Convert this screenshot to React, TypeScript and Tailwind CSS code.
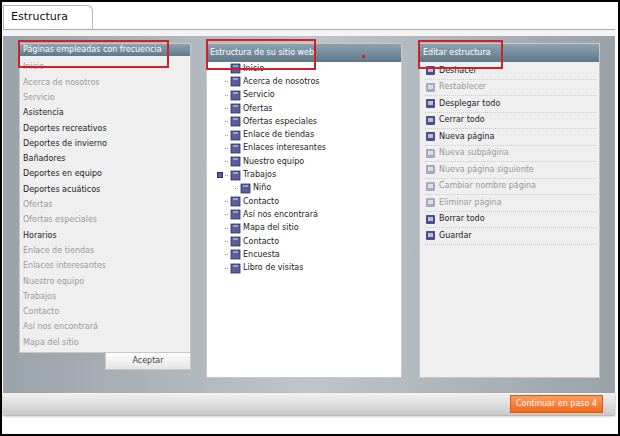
const freq: [string, boolean][] = [
  ['Inicio', false], ['Acerca de nosotros', false], ['Servicio', false], ['Asistencia', true],
  ['Deportes recreativos', true], ['Deportes de invierno', true], ['Bañadores', true],
  ['Deportes en equipo', true], ['Deportes acuáticos', true], ['Ofertas', false],
  ['Ofertas especiales', false], ['Horarios', true], ['Enlace de tiendas', false],
  ['Enlaces interesantes', false], ['Nuestro equipo', false], ['Trabajos', false],
  ['Contacto', false], ['Así nos encontrará', false], ['Mapa del sitio', false],
];

const tree: [string, number][] = [
  ['Inicio', 0], ['Acerca de nosotros', 0], ['Servicio', 0], ['Ofertas', 0],
  ['Ofertas especiales', 0], ['Enlace de tiendas', 0], ['Enlaces interesantes', 0],
  ['Nuestro equipo', 0], ['Trabajos', 0], ['Niño', 1], ['Contacto', 0],
  ['Así nos encontrará', 0], ['Mapa del sitio', 0], ['Contacto', 0], ['Encuesta', 0],
  ['Libro de visitas', 0],
];

const actions: [string, boolean][] = [
  ['Deshacer', true], ['Restablecer', false], ['Desplegar todo', true], ['Cerrar todo', true],
  ['Nueva página', true], ['Nueva subpágina', false], ['Nueva página siguiente', false],
  ['Cambiar nombre página', false], ['Eliminar página', false], ['Borrar todo', true], ['Guardar', true],
];

function PageIcon() {
  return (
    <svg width="11" height="11" viewBox="0 0 11 11" className="shrink-0">
      <rect x="1" y="1" width="9" height="9" fill="#5b5f96" stroke="#2e3060" strokeWidth="0.8" />
      <rect x="3" y="2" width="5" height="2" fill="#9aa0d0" />
    </svg>
  );
}

function Header({ title }: { title: string }) {
  return (
    <div className="h-[18px] flex items-center px-[3px] text-white text-[8px] whitespace-nowrap bg-gradient-to-b from-[#8ea3b2] to-[#5f7888]">
      {title}
    </div>
  );
}

export default function App() {
  return (
    <div className="w-[620px] h-[436px] border-2 border-black bg-white relative overflow-hidden" style={{ fontFamily: '"DejaVu Sans", Verdana, sans-serif' }}>
      <div className="pt-[3px] pl-px">
        <div className="w-[90px] h-[24px] border border-b-0 border-[#b5b5b5] rounded-tr-[6px] bg-white flex items-center pl-[7px] text-[11px] text-[#111]">
          Estructura
        </div>
      </div>
      <div className="mx-px w-[612px] border-t border-[#aaa]">
        <div className="h-[6px] bg-[#f4f4f4]" />
        <div className="h-[357px] bg-gradient-to-r from-[#9aa2aa] via-[#bfc5ca] to-[#9aa2aa] flex pt-[7px] pl-[16px] gap-[15px]">
          <div className="w-[172px] flex flex-col">
            <div className="border border-[#c8c8c8] bg-[#efefef] h-[310px] flex flex-col">
              <Header title="Páginas empleadas con frecuencia" />
              <div className="pt-[5px] pl-[3px]">
                {freq.map(([t, b], i) => (
                  <div key={i} className={`h-[15.3px] text-[8px] ${b ? 'text-[#222]' : 'text-[#9a9a9a]'}`}>{t}</div>
                ))}
              </div>
            </div>
            <div className="flex justify-end -mt-[1px]">
              <div className="w-[86px] h-[18px] border border-[#c8c8c8] bg-gradient-to-b from-white to-[#e4e4e4] flex items-center justify-center text-[8px] text-[#444]">Aceptar</div>
            </div>
          </div>
          <div className="w-[196px] h-[335px] border border-[#c8c8c8] bg-white">
            <Header title="Estructura de su sitio web" />
            <div className="pl-[18px]">
              {tree.map(([t, lvl], i) => (
                <div key={i} className="h-[13.3px] flex items-center gap-[2px] text-[8px] text-[#222] relative" style={{ paddingLeft: lvl * 10 }}>
                  {t === 'Trabajos' && <span className="absolute -left-[8px] w-[6px] h-[6px] bg-[#5b5f96] border border-[#2e3060]" />}
                  <span className="w-[3px] border-t border-dotted border-[#999]" />
                  <PageIcon />
                  <span>{t}</span>
                </div>
              ))}
            </div>
          </div>
          <div className="w-[181px] h-[335px] border border-[#c8c8c8] bg-[#efefef] ml-[2px]">
            <Header title="Editar estructura" />
            <div className="pl-[5px] pr-[3px] pt-[1px]">
              {actions.map(([t, on], i) => (
                <div key={i} className={`h-[16.5px] flex items-center gap-[3px] text-[8px] border-b border-dotted border-[#ccc] ${on ? 'text-[#222]' : 'text-[#999]'}`}>
                  <svg width="11" height="11" viewBox="0 0 11 11" className="shrink-0">
                    <rect x="1" y="1" width="9" height="9" rx="1" fill={on ? '#4a4f86' : '#a6a9c0'} />
                    <rect x="3" y="3" width="5" height="4" fill={on ? '#b9bde0' : '#dcdde8'} />
                  </svg>
                  {t}
                </div>
              ))}
            </div>
          </div>
        </div>
        <div className="h-[22px] bg-gradient-to-b from-[#f2f2f2] to-[#c9c9c9] flex items-center justify-end pr-[12px] shadow-[0_1px_2px_#999]">
          <div className="w-[93px] h-[18px] bg-gradient-to-b from-[#ff9a5a] to-[#ef6a1c] border border-[#d75a10] text-white text-[8px] flex items-center justify-center">Continuar en paso 4</div>
        </div>
      </div>
      <div className="absolute border-2 border-[#d0202a] left-[16px] top-[38px] w-[151px] h-[28px]" />
      <div className="absolute border-2 border-[#d0202a] left-[204px] top-[37px] w-[110px] h-[31px]" />
      <div className="absolute border-2 border-[#d0202a] left-[416px] top-[38px] w-[85px] h-[29px]" />
      <div className="absolute bg-[#d0202a] left-[360px] top-[53px] w-[3px] h-[3px]" />
    </div>
  );
}
